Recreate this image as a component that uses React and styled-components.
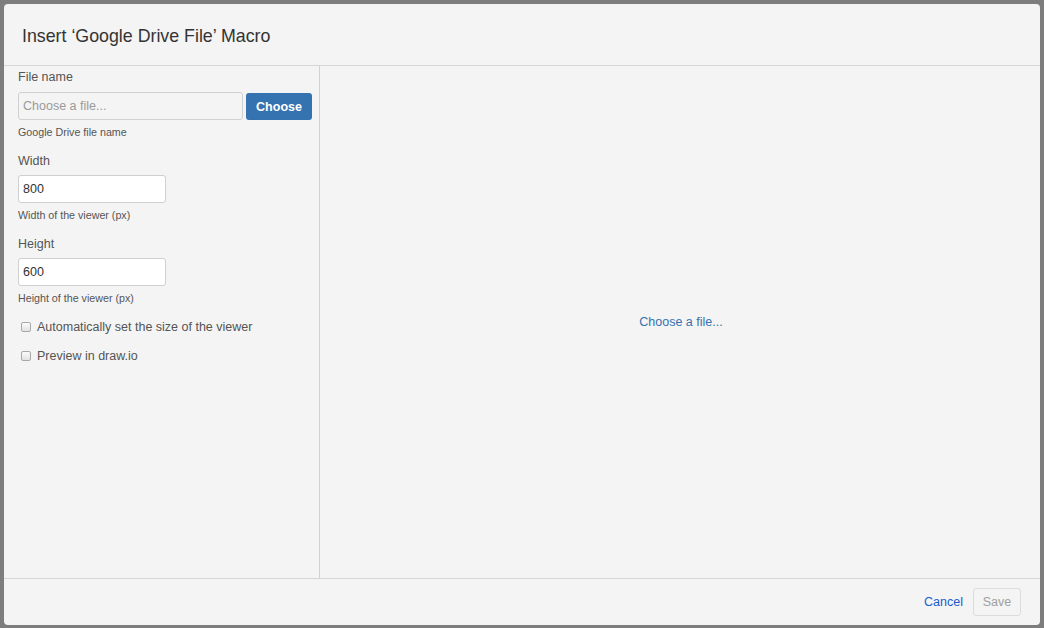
import React, { useState } from "react";
import styled, { createGlobalStyle } from "styled-components";

const GlobalStyle = createGlobalStyle`
  html, body {
    margin: 0;
    padding: 0;
    background: #7d7d7d;
  }
  body {
    font-family: "Liberation Sans", Arial, Helvetica, sans-serif;
    color: #333;
  }
  * {
    box-sizing: border-box;
  }
`;

const App = () => {
  const [width, setWidth] = useState("800");
  const [height, setHeight] = useState("600");
  const [autoSize, setAutoSize] = useState(false);
  const [preview, setPreview] = useState(false);

  return (
    <>
      <GlobalStyle />
      <Backdrop>
        <Dialog>
          <Header>
            <Title>Insert ‘Google Drive File’ Macro</Title>
          </Header>

          <Body>
            <Sidebar>
              <Field>
                <Label>File name</Label>
                <FileRow>
                  <TextInput
                    $width="225px"
                    $muted
                    placeholder="Choose a file..."
                    readOnly
                  />
                  <PrimaryButton type="button">Choose</PrimaryButton>
                </FileRow>
                <Help>Google Drive file name</Help>
              </Field>

              <Field>
                <Label>Width</Label>
                <TextInput
                  $width="148px"
                  value={width}
                  onChange={(e) => setWidth(e.target.value)}
                />
                <Help>Width of the viewer (px)</Help>
              </Field>

              <Field>
                <Label>Height</Label>
                <TextInput
                  $width="148px"
                  value={height}
                  onChange={(e) => setHeight(e.target.value)}
                />
                <Help>Height of the viewer (px)</Help>
              </Field>

              <CheckRow>
                <Checkbox
                  type="checkbox"
                  checked={autoSize}
                  onChange={(e) => setAutoSize(e.target.checked)}
                />
                Automatically set the size of the viewer
              </CheckRow>
              <CheckRow>
                <Checkbox
                  type="checkbox"
                  checked={preview}
                  onChange={(e) => setPreview(e.target.checked)}
                />
                Preview in draw.io
              </CheckRow>
            </Sidebar>

            <PreviewPane>
              <PreviewLink href="#">Choose a file...</PreviewLink>
            </PreviewPane>
          </Body>

          <Footer>
            <LinkButton type="button">Cancel</LinkButton>
            <SecondaryButton type="button" disabled>
              Save
            </SecondaryButton>
          </Footer>
        </Dialog>
      </Backdrop>
    </>
  );
};

const Backdrop = styled.div`
  width: 1044px;
  height: 628px;
  padding: 4px 4px 3px 4px;
`;

const Dialog = styled.div`
  width: 1036px;
  height: 621px;
  background: #f4f4f4;
  border-radius: 4px;
  display: flex;
  flex-direction: column;
  overflow: hidden;
`;

const Header = styled.div`
  height: 62px;
  flex: none;
  display: flex;
  align-items: center;
  padding: 3px 18px 0;
  border-bottom: 1px solid #d6d6d6;
`;

const Title = styled.h2`
  margin: 0;
  font-size: 17.8px;
  font-weight: 400;
  color: #333;
`;

const Body = styled.div`
  flex: 1;
  display: flex;
  min-height: 0;
`;

const Sidebar = styled.div`
  width: 316px;
  flex: none;
  padding: 1px 0 0 14px;
  border-right: 1px solid #d2d2d2;
`;

const Field = styled.div`
  display: flex;
  flex-direction: column;
  align-items: flex-start;
  margin-bottom: 11px;
`;

const Label = styled.label`
  font-size: 12.5px;
  line-height: 20px;
  color: #555;
  margin-bottom: 4px;
`;

const FileRow = styled.div`
  display: flex;
  align-items: center;
  gap: 3px;
`;

const TextInput = styled.input`
  width: ${(p) => p.$width};
  height: 28px;
  padding: 0 4px;
  border: 1px solid ${(p) => (p.$muted ? "#d0d0d0" : "#cfcfcf")};
  border-radius: 3px;
  background: ${(p) => (p.$muted ? "#f4f4f4" : "#fff")};
  font-family: inherit;
  font-size: 12.5px;
  color: #333;
  outline: none;

  &::placeholder {
    color: #9a9a9a;
  }
`;

const PrimaryButton = styled.button`
  width: 66px;
  height: 27px;
  margin-top: 2px;
  border: none;
  border-radius: 3px;
  background: #3572b0;
  color: #fff;
  font-family: inherit;
  font-size: 12.5px;
  font-weight: 700;
  cursor: pointer;
`;

const Help = styled.div`
  margin-top: 4px;
  font-size: 10.7px;
  line-height: 16px;
  color: #555;
`;

const CheckRow = styled.label`
  display: flex;
  align-items: center;
  height: 20px;
  margin-bottom: 9px;
  padding-left: 3px;
  font-size: 12.5px;
  color: #555;
  cursor: pointer;
`;

const Checkbox = styled.input`
  appearance: none;
  width: 10px;
  height: 10px;
  margin: 0 6px 1px 0;
  border: 1px solid #a8a8a8;
  border-radius: 2px;
  background: linear-gradient(#fbfbfb, #e2e2e2);
  cursor: pointer;

  &:checked {
    background: #3572b0;
    border-color: #2a5d92;
  }
`;

const PreviewPane = styled.div`
  flex: 1;
  display: flex;
  align-items: center;
  justify-content: center;
  padding-left: 2px;
`;

const PreviewLink = styled.a`
  font-size: 12.5px;
  color: #3572b0;
  text-decoration: none;
`;

const Footer = styled.div`
  height: 47px;
  flex: none;
  display: flex;
  align-items: center;
  justify-content: flex-end;
  gap: 10px;
  padding: 0 19px 1px 0;
  border-top: 1px solid #d6d6d6;
`;

const LinkButton = styled.button`
  border: none;
  background: none;
  padding: 0;
  font-family: inherit;
  font-size: 12.5px;
  color: #1a5ccc;
  cursor: pointer;
`;

const SecondaryButton = styled.button`
  width: 48px;
  height: 28px;
  border: 1px solid #dcdcdc;
  border-radius: 3px;
  background: #f4f4f4;
  font-family: inherit;
  font-size: 12.5px;
  color: #a0a0a0;
`;

export default App;
